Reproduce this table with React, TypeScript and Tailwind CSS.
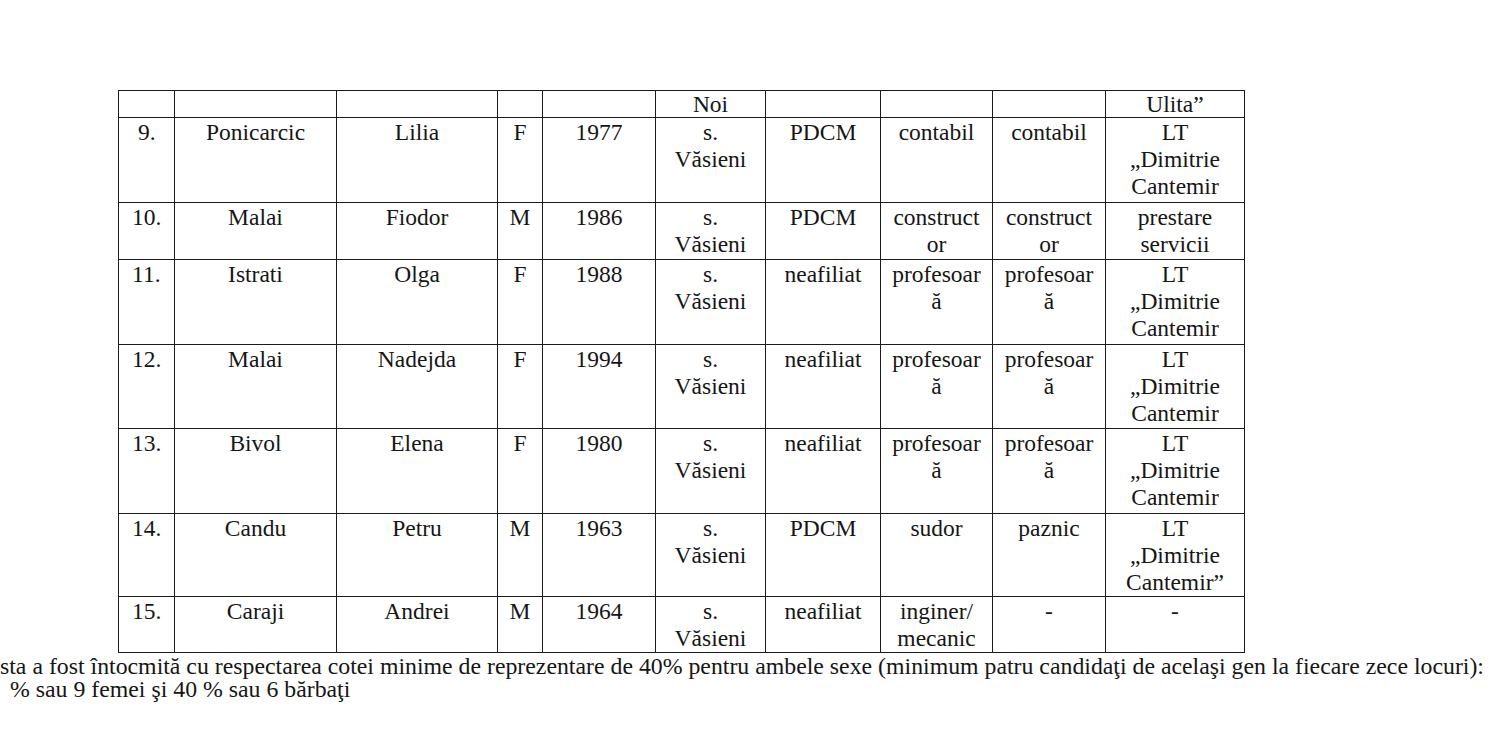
import React from "react";

type Row = { h: string; cells: string[]; first: string };

const colClasses = [
  "w-[56px]",
  "w-[162px]",
  "w-[161px]",
  "w-[45px]",
  "w-[113px]",
  "w-[110px]",
  "w-[115px]",
  "w-[112px]",
  "w-[113px]",
  "w-[139px]",
];

const LT = "LT|„Dimitrie|Cantemir";
const VAS = "s.|Văsieni";

const rows: Row[] = [
  { h: "h-[27px] leading-[25px]", first: "pl-[13px]", cells: ["", "", "", "", "", "Noi", "", "", "", "Ulita”"] },
  { h: "h-[85px]", first: "pl-[19px]", cells: ["9.", "Ponicarcic", "Lilia", "F", "1977", VAS, "PDCM", "contabil", "contabil", LT] },
  { h: "h-[57px]", first: "pl-[13px]", cells: ["10.", "Malai", "Fiodor", "M", "1986", VAS, "PDCM", "construct|or", "construct|or", "prestare|servicii"] },
  { h: "h-[85px]", first: "pl-[13px]", cells: ["11.", "Istrati", "Olga", "F", "1988", VAS, "neafiliat", "profesoar|ă", "profesoar|ă", LT] },
  { h: "h-[84px]", first: "pl-[13px]", cells: ["12.", "Malai", "Nadejda", "F", "1994", VAS, "neafiliat", "profesoar|ă", "profesoar|ă", LT] },
  { h: "h-[85px]", first: "pl-[13px]", cells: ["13.", "Bivol", "Elena", "F", "1980", VAS, "neafiliat", "profesoar|ă", "profesoar|ă", LT] },
  { h: "h-[82px]", first: "pl-[13px]", cells: ["14.", "Candu", "Petru", "M", "1963", VAS, "PDCM", "sudor", "paznic", "LT|„Dimitrie|Cantemir”"] },
  { h: "h-[56px]", first: "pl-[13px]", cells: ["15.", "Caraji", "Andrei", "M", "1964", VAS, "neafiliat", "inginer/|mecanic", "-", "-"] },
];

function Lines({ text }: { text: string }) {
  return (
    <>
      {text.split("|").map((p, i) => (
        <div key={i} className="whitespace-nowrap">
          {p}
        </div>
      ))}
    </>
  );
}

export default function App() {
  return (
    <div className="w-[1500px] h-[737px] bg-white text-[#161616] overflow-hidden font-['Liberation_Serif','Times_New_Roman',serif]">
      <div className="pt-[90px] pl-[118px]">
        <table className="table-fixed border-collapse text-[23.5px] leading-[27px]">
          <colgroup>
            {colClasses.map((c, i) => (
              <col key={i} className={c} />
            ))}
          </colgroup>
          <tbody>
            {rows.map((r, ri) => (
              <tr key={ri} className={r.h}>
                {r.cells.map((c, ci) => (
                  <td
                    key={ci}
                    className={
                      "border border-[#1c1c1c] align-top p-0 pt-[1px] " +
                      (ci === 0 ? "text-left " + r.first : "text-center")
                    }
                  >
                    <Lines text={c} />
                  </td>
                ))}
              </tr>
            ))}
          </tbody>
        </table>
      </div>
      <div className="text-[23.8px] leading-[23px] pt-[2px] whitespace-nowrap">
        <div>
          sta a fost întocmită cu respectarea cotei minime de reprezentare de 40% pentru ambele sexe (minimum patru candidaţi de acelaşi gen la fiecare zece locuri):
        </div>
        <div className="pl-[10px]">% sau 9 femei şi 40 % sau 6 bărbaţi</div>
      </div>
    </div>
  );
}
